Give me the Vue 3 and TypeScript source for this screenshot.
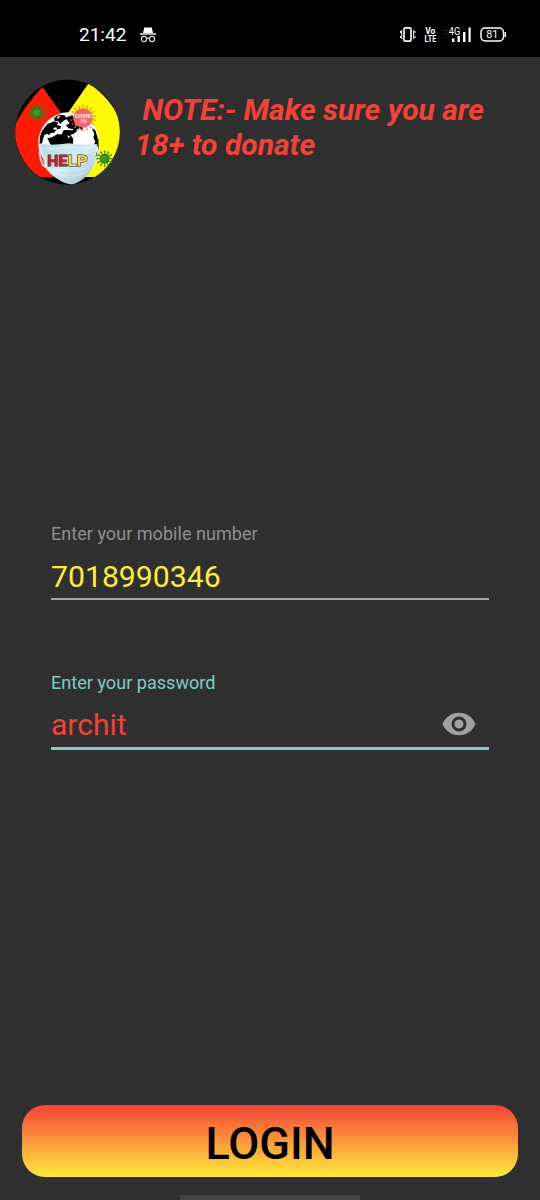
<script setup lang="ts">
import { ref } from 'vue'

interface Virus { x: number; y: number; r: number }

const mobile = ref<string>('7018990346')
const password = ref<string>('archit')
const visible = ref<boolean>(true)
const viruses: Virus[] = [
  { x: 81, y: 113, r: 19 },
  { x: 284, y: 251, r: 17 },
]
const spikes: number[] = Array.from({ length: 12 }, (_, i) => i * 30)
const rays: number[] = Array.from({ length: 18 }, (_, i) => i * 20)
</script>

<template>
  <div class="screen">
    <div class="status">
      <span class="time">21:42</span>
      <svg class="incognito" width="18" height="18" viewBox="0 0 18 18">
        <path d="M4 7 5.2 1.8Q5.5 1 6.4 1.2L9 1.8 11.6 1.2Q12.5 1 12.8 1.8L14 7Z" fill="#fff" />
        <path d="M1 8H17" stroke="#fff" stroke-width="1.4" />
        <g fill="none" stroke="#ddd" stroke-width="1.2">
          <circle cx="5" cy="13" r="2.6" /><circle cx="13" cy="13" r="2.6" /><path d="M7.5 12.5Q9 11.6 10.5 12.5" />
        </g>
      </svg>
      <svg class="indicators" width="130" height="40" viewBox="0 0 130 40">
        <g fill="none" stroke="#fff">
          <rect x="14" y="12.9" width="7" height="13.2" rx="1.2" stroke-width="1.6" />
          <path d="M11.7 15V24M23.7 15V24M10.5 16V18M10.5 21V23M25 16V18M25 21V23" stroke-width="1" />
          <rect x="91" y="13" width="22.5" height="13" rx="4.2" stroke-width="1.5" />
          <path d="M115.3 17V22" stroke-width="1.6" />
        </g>
        <g fill="#fff">
          <text x="35.2" y="18.6" font-size="8.5" font-weight="700" textLength="10" lengthAdjust="spacingAndGlyphs">Vo</text>
          <text x="34.5" y="26.9" font-size="9" font-weight="700" textLength="11.8" lengthAdjust="spacingAndGlyphs">LTE</text>
          <text x="58.7" y="19.5" font-size="10" textLength="11.5" lengthAdjust="spacingAndGlyphs">4G</text>
          <rect x="62" y="23.5" width="2.4" height="3.5" />
          <rect x="67.5" y="21" width="2.4" height="6" />
          <rect x="73" y="17" width="2.4" height="10" />
          <rect x="78.5" y="12.5" width="2.2" height="14.5" />
          <text x="96.2" y="23.3" font-size="10.5" textLength="12" lengthAdjust="spacingAndGlyphs">81</text>
        </g>
        <path d="M53.5 15.5H57M53.5 18.5H57" stroke="#333" stroke-width="1.2" />
      </svg>
    </div>

    <header class="header">
      <svg class="logo" width="106" height="106" viewBox="15 12 318 318">
        <defs>
          <clipPath id="disc"><circle cx="172.500" cy="171.500" r="157" /></clipPath>
          <clipPath id="earth"><circle cx="176" cy="203" r="88" /></clipPath>
          <linearGradient id="mask" x1="0" y1="0" x2="1" y2="1">
            <stop offset="0" stop-color="#b9d9e2" />
            <stop offset="0.5" stop-color="#d6ecf1" />
            <stop offset="1" stop-color="#8fbccb" />
          </linearGradient>
        </defs>
        <g clip-path="url(#disc)">
          <rect x="10" y="10" width="330" height="330" fill="#000" />
          <path d="M97 36 162 127 130 306H87Q30 270 8 165Q38 98 97 36Z" fill="#ff1b06" />
          <path d="M236 25 168 122 200 306H262Q340 250 340 165Q315 78 236 25Z" fill="#fffa05" />
        </g>
        <circle cx="176" cy="203" r="91" fill="#fff" />
        <g clip-path="url(#earth)">
          <path d="M98 165 112 147 133 139 145 143 141 150 153 154 151 161 140 163 132 174 123 173 117 181 112 176 103 180 96 205 88 207 88 180Z" fill="#000" />
          <path d="M132 130 145 119 164 121 170 132 159 139 151 147 144 139 134 138Z" fill="#000" />
          <path d="M112 190 126 187 143 177 158 179 170 188 190 196 188 211H123L119 204Z" fill="#000" />
          <path d="M166 128 188 120 197 150 191 163 175 160 168 151 179 145Z" fill="#000" />
          <path d="M161 165 188 166 199 151 217 157 218 166 203 167 190 177 181 180 190 191 184 204H163L149 191Z" fill="#000" />
          <path d="M246 160 256 165 268 190V213H250L256 200 250 187 253 178Z" fill="#000" />
          <path d="M145 123 151 122 147 129 139 132ZM134 157 142 158 138 164 128 163ZM172 181 181 185 175 190Z" fill="#fff" />
          <path d="M199 165 209 159 216 166 206 173Z" fill="#fff" />
        </g>
        <path d="M264 192Q268 220 258 246" fill="none" stroke="#111" stroke-width="3" />
        <path d="M94 211Q81 229 98 270L112 280M260 214Q270 232 252 272" fill="none" stroke="#d1e6e9" stroke-width="5" />
        <path d="M91 208Q140 211 175 205Q215 211 261 207L253 266Q242 296 218 313Q200 327 186 328Q166 327 146 314Q116 296 103 272Z" fill="url(#mask)" />
        <path d="M96 219Q137 226 177 215Q218 223 257 216M103 272Q148 292 187 287Q226 286 248 266M112 282Q146 306 186 303Q218 301 237 283" fill="none" stroke="#f4fbfb" stroke-width="3" opacity=".4" />
        <g v-for="v in viruses" :key="v.x" :transform="`translate(${v.x} ${v.y})`">
          <g stroke="#287d12" fill="#3ba31e" stroke-width="2.400">
            <g v-for="a in spikes" :key="a" :transform="`rotate(${a})`">
              <path :d="`M0 0V${-v.r - 5}`" /><circle :cy="-v.r - 5" r="1.700" />
            </g>
          </g>
          <circle :r="v.r - 2" fill="#287f15" />
          <path d="M-10-6 0-10 9-4 6 6-4 10-10 1ZM-10-6 6 6M0-10-4 10M9-4-10 1" fill="#37851c" stroke="#55b032" stroke-width="1.500" />
        </g>
        <g transform="translate(219 129)">
          <g fill="#ff554b" stroke="#ff554b" stroke-width="2">
            <g v-for="a in rays" :key="a" :transform="`rotate(${a})`">
              <path d="M0-29V-36" /><circle cy="-37" r="1" />
            </g>
          </g>
          <circle r="29" fill="#fa6266" />
          <text x="-24" y="0" fill="#fff" font-size="14" font-weight="700" textLength="48" lengthAdjust="spacingAndGlyphs">COVID</text>
          <text x="-13" y="16" fill="#fff" font-size="14" font-weight="700" textLength="24" lengthAdjust="spacingAndGlyphs">-19</text>
        </g>
        <g class="help" font-size="46" stroke="#181818" stroke-width="3" stroke-linejoin="round">
          <text x="112" y="272" fill="#d82028" textLength="60" lengthAdjust="spacingAndGlyphs">HE</text>
          <text x="173" y="272" fill="#f5d84a" textLength="60" lengthAdjust="spacingAndGlyphs">LP</text>
        </g>
      </svg>
      <h1 class="note">&nbsp;NOTE:- Make sure you are<br>18+ to donate</h1>
    </header>

    <main class="form">
      <label class="field">
        <span class="label">Enter your mobile number</span>
        <input v-model="mobile" class="input mobile" type="tel">
      </label>
      <label class="field active">
        <span class="label">Enter your password</span>
        <span class="row">
          <input v-model="password" class="input password" :type="visible ? 'text' : 'password'">
          <button class="eye" type="button" aria-label="Toggle password" @click="visible = !visible">
            <svg width="36" height="36" viewBox="0 0 24 24" fill="#a0a0a0">
              <path d="M12 4.500C7 4.500 2.730 7.610 1 12c1.730 4.390 6 7.500 11 7.500s9.270-3.110 11-7.500c-1.730-4.390-6-7.500-11-7.500zM12 17a5 5 0 1 1 0-10 5 5 0 0 1 0 10zm0-8a3 3 0 1 0 0 6 3 3 0 0 0 0-6z" />
            </svg>
          </button>
        </span>
      </label>
    </main>

    <button class="login" type="button">LOGIN</button>
    <div class="nav"><span class="handle"></span></div>
  </div>
</template>

<style>
body { margin: 0; background: #303030; }
</style>

<style scoped>
.screen {
  display: flex;
  flex-direction: column;
  width: 540px;
  height: 1200px;
  overflow: hidden;
  background: #303030;
  font-family: Roboto, "Liberation Sans", sans-serif;
}
.status {
  box-sizing: border-box;
  display: flex;
  flex: none;
  height: 57px;
  padding: 15px 20px 0 79px;
  background: #000;
  color: #fff;
}
.time { width: 60px; font-size: 19px; line-height: 40px; }
.incognito { margin-top: 11px; }
.indicators { margin-left: auto; }
.header {
  display: flex;
  height: 128px;
  padding: 22px 0 0 15px;
  box-sizing: border-box;
}
.logo { flex: none; }
.help { font-weight: 700; paint-order: stroke; }
.note {
  margin: 13px 0 0 14px;
  color: #f44336;
  font-size: 30px;
  font-style: italic;
  font-weight: 700;
  line-height: 35px;
  white-space: nowrap;
}
.form {
  display: flex;
  flex-direction: column;
  gap: 71px;
  padding: 338px 51px 0;
}
.field { display: flex; flex-direction: column; height: 77px; border-bottom: 2px solid #a6a6a6; box-sizing: border-box; }
.field.active { height: 79px; border-bottom: 3px solid #80cbc4; }
.label { color: #8f8f8f; font-size: 18.1px; line-height: 22px; }
.active .label { padding-top: 1px; color: #80cbc4; }
.input {
  width: 100%;
  min-width: 0;
  height: 40px;
  margin-top: 12px;
  padding: 0;
  border: 0;
  outline: 0;
  background: transparent;
  font: 30.2px/40px Roboto, "Liberation Sans", sans-serif;
}
.mobile { color: #ffeb3b; }
.password { margin-top: 11px; color: #f44336; font-size: 30px; }
.row { display: flex; }
.eye { flex: none; height: 36px; margin: 12px 12px 0 0; padding: 0; border: 0; background: none; }
.eye svg { display: block; }
.login {
  height: 72px;
  margin: auto 22px 18px;
  padding: 6px 0 0;
  border: 0;
  border-radius: 23px;
  background: linear-gradient(#f44336, #ffeb3b);
  color: #000;
  font: 500 45px/66px Roboto, "Liberation Sans", sans-serif;
}
.nav { display: flex; flex: none; justify-content: center; height: 5px; }
.handle { width: 180px; background: #444; }
</style>
